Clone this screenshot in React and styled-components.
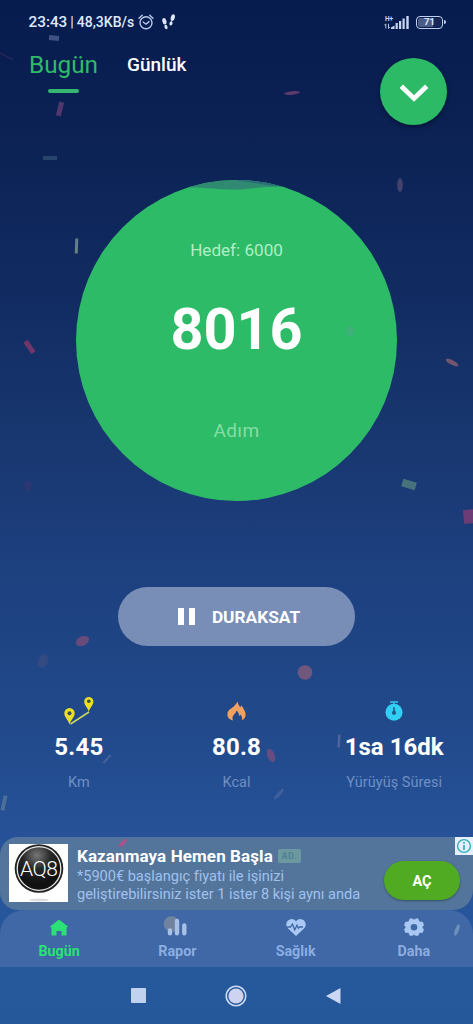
import React from "react";
import styled, { createGlobalStyle, css } from "styled-components";

const GlobalStyle = createGlobalStyle`
  * {
    box-sizing: border-box;
  }
  body {
    margin: 0;
    background: #26579c;
  }
`;

const Screen = styled.div`
  position: relative;
  display: flex;
  flex-direction: column;
  width: 473px;
  height: 1024px;
  overflow: hidden;
  color: white;
  font-family: Roboto, "Noto Sans", sans-serif;
  background: linear-gradient(
    #071c4e 0%,
    #0b2153 12%,
    #112b61 28%,
    #18366f 42%,
    #1d407f 56%,
    #21498a 70%,
    #275299 82%,
    #26589c 95%,
    #25579b 100%
  );
`;

// status bar
const StatusBar = styled.div`
  display: flex;
  align-items: center;
  height: 44px;
  padding: 0 27px 0 28.5px;
  color: #dfe8fb;
  font-weight: 500;
`;

const StatusText = styled.span`
  font-size: ${(props) => props.size}px;
  line-height: 20px;
  margin-right: ${(props) => props.gap || 0}px;
  white-space: pre;
`;

const StatusIcons = styled.div`
  display: flex;
  align-items: center;
  flex: 1;
  gap: 8px;
`;

const Signal = styled.svg`
  margin-right: 7px;
`;

const Battery = styled.div`
  position: relative;
  display: flex;
  align-items: center;
  justify-content: center;
  width: 27px;
  height: 13px;
  margin-right: 3px;
  border: 1.5px solid #c3d0ee;
  border-radius: 4px;
  font-size: 9.5px;
  line-height: 10px;
  font-weight: 700;
  background: linear-gradient(90deg, #4d5c87 65%, #16295b 65%);
  background-clip: content-box;
  padding: 1px;

  &::after {
    content: "";
    position: absolute;
    right: -4px;
    top: 3px;
    width: 2px;
    height: 4px;
    border-radius: 0 2px 2px 0;
    background: #c3d0ee;
  }
`;

// header
const Header = styled.div`
  display: flex;
  align-items: flex-start;
  height: 136px;
  padding: 7px 26px 0 29px;
`;

const Tab = styled.div`
  display: flex;
  flex-direction: column;
  align-items: center;
  line-height: 28px;
  color: white;
  font-size: 19px;
  font-weight: 500;
  margin-left: 29px;

  ${(props) =>
    props.active &&
    css`
      color: #2fba69;
      font-size: 24.3px;
      font-weight: 400;
      margin-left: 0;

      &::after {
        content: "";
        width: 31px;
        height: 4px;
        margin-top: 10px;
        border-radius: 2px;
        background: #35b771;
      }
    `};
`;

const RoundButton = styled.button`
  display: flex;
  align-items: center;
  justify-content: center;
  width: 67px;
  height: 67px;
  margin: 7px 0 0 auto;
  padding: 3px 0 0;
  border: 0;
  border-radius: 50%;
  background: #2dba66;
  box-shadow: 0 2px 4px rgba(0, 10, 30, 0.5);
`;

// step circle
const Circle = styled.div`
  position: relative;
  display: flex;
  flex-direction: column;
  align-items: center;
  flex: none;
  align-self: center;
  width: 321px;
  height: 321px;
  padding-top: 60px;
  border-radius: 50%;
  overflow: hidden;
  background: #2dbb67;
`;

const Wave = styled.svg`
  position: absolute;
  top: 0;
  left: 0;
`;

const Goal = styled.div`
  font-size: 17.1px;
  line-height: 20px;
  color: #b0eec5;
`;

const Steps = styled.div`
  margin-top: 35px;
  font-size: 57.6px;
  line-height: 70px;
  font-weight: 700;
`;

const Unit = styled.div`
  margin-top: 54px;
  font-size: 19px;
  line-height: 24px;
  letter-spacing: 0.4px;
  color: #86dea5;
`;

const PauseButton = styled.button`
  display: flex;
  align-items: center;
  justify-content: center;
  flex: none;
  align-self: center;
  gap: 17px;
  width: 237px;
  height: 59px;
  margin-top: 86px;
  padding: 0 0 0 5px;
  border: 0;
  border-radius: 30px;
  color: white;
  font-family: inherit;
  font-size: 17.3px;
  font-weight: 700;
  background: #798eb6;
`;

const PauseBars = styled.span`
  width: 17px;
  height: 17px;
  border: solid white;
  border-width: 0 6px;
`;

// stats
const Stats = styled.div`
  display: grid;
  grid-template-columns: repeat(3, 1fr);
  height: 191px;
  padding-top: 48px;
`;

const Stat = styled.div`
  display: flex;
  flex-direction: column;
  align-items: center;
`;

const StatIcon = styled.div`
  display: flex;
  align-items: center;
  justify-content: center;
  height: 34px;
`;

const StatValue = styled.div`
  margin-top: 3px;
  font-size: 24px;
  line-height: 32px;
  font-weight: 700;
  letter-spacing: ${(props) => props.spacing || 0}px;
  white-space: nowrap;
`;

const StatLabel = styled.div`
  margin-top: 11px;
  font-size: 14.5px;
  line-height: 18px;
  letter-spacing: 0.02px;
  color: #6f8fc4;
  white-space: nowrap;
`;

// ad
const Ad = styled.div`
  position: relative;
  display: flex;
  flex: none;
  height: 73px;
  padding: 7px 13px 0 9px;
  border-radius: 18px 0 20px 18px;
  background: #53749b;
`;

const AdLogo = styled.div`
  width: 59px;
  height: 58px;
  background: white;
`;

const AdBody = styled.div`
  flex: 1;
  padding-left: 9px;
`;

const AdTitle = styled.div`
  display: flex;
  align-items: center;
  gap: 5px;
  height: 24px;
  font-size: 17px;
  line-height: 24px;
  font-weight: 700;
  letter-spacing: 0.1px;
  white-space: nowrap;
`;

const AdTag = styled.span`
  width: 23px;
  height: 14px;
  border-radius: 2px;
  font-size: 9px;
  line-height: 15px;
  text-align: center;
  letter-spacing: 0.6px;
  color: #527f96;
  background: #6c98a0;
`;

const AdText = styled.div`
  font-size: 14.6px;
  line-height: 17.5px;
  letter-spacing: -0.03px;
  color: #a1c1ec;
  white-space: nowrap;
`;

const AdButton = styled.button`
  width: 76px;
  height: 39px;
  margin-top: 17px;
  padding: 2px 0 0;
  border: 0;
  border-radius: 20px;
  color: white;
  font-family: inherit;
  font-size: 14.5px;
  font-weight: 700;
  background: #50ab22;
  box-shadow: 0 1px 2px rgba(20, 50, 50, 0.5);
`;

const AdInfo = styled.svg`
  position: absolute;
  top: 0;
  right: 0;
  background: #e3f0fb;
`;

// bottom navigation
const BottomNav = styled.div`
  display: grid;
  grid-template-columns: repeat(4, 1fr);
  flex: none;
  height: 57px;
  border-radius: 24px 24px 0 0;
  background: #4067a6;
`;

const NavItem = styled.div`
  display: flex;
  flex-direction: column;
  align-items: center;
  padding-top: 7px;
  color: ${(props) => (props.active ? "#2ce078" : "#8baee2")};
  font-size: 14.3px;
  line-height: 18px;
  font-weight: 700;

  svg {
    margin-bottom: 5px;
    overflow: visible;
  }
`;

const SystemBar = styled.div`
  display: flex;
  align-items: center;
  justify-content: center;
  flex: 1;
  gap: 79px;
  padding-right: 1px;
`;

// confetti falls over everything
const Confetti = styled.svg`
  position: absolute;
  top: 0;
  left: 0;
  pointer-events: none;
`;

const rects = [
  { x: 54, y: 38, w: 10, h: 5, r: 5, color: "#3f5283" },
  { x: 60, y: 109, w: 5, h: 14, r: 14, color: "#50376c" },
  { x: 50, y: 158, w: 14, h: 4, r: 0, color: "#27446a" },
  { x: 76.5, y: 246, w: 3, h: 15, r: 2, color: "#64817f" },
  { x: 29.5, y: 347, w: 5, h: 14, r: -35, color: "#703669" },
  { x: 409, y: 484.5, w: 14, h: 8, r: 17, color: "#47727c" },
  { x: 469, y: 516.5, w: 11, h: 14, r: -4, color: "#6c3c77" },
  { x: 107, y: 759, w: 2, h: 11, r: 42, color: "#46649b" },
  { x: 339, y: 741, w: 2.5, h: 13, r: 3, color: "#52629a" },
  { x: 4, y: 803, w: 4, h: 15, r: 12, color: "#4a7098" },
  { x: 6, y: 56, w: 1, h: 16, r: -62, color: "#30285c" },
];

const ellipses = [
  { x: 292, y: 93, rx: 8, ry: 1.7, r: -6, color: "#603a6a" },
  { x: 400, y: 185, rx: 2.8, ry: 7, r: 0, color: "#43426d" },
  { x: 452, y: 362.5, rx: 7, ry: 2.3, r: 27, color: "#75546f" },
  { x: 28, y: 486, rx: 4, ry: 6, r: 0, color: "#2a3773" },
  { x: 82.5, y: 641, rx: 7, ry: 4.6, r: -25, color: "#694b79" },
  { x: 43, y: 661, rx: 5, ry: 7, r: 25, color: "#334a83" },
  { x: 305, y: 672.5, rx: 7.3, ry: 7.3, r: 0, color: "#70577c" },
  { x: 271, y: 755.5, rx: 3.7, ry: 7, r: -20, color: "#674c82" },
  { x: 279, y: 794, rx: 2, ry: 7, r: 42, color: "#3f609c" },
  { x: 123, y: 843, rx: 2, ry: 5.5, r: 45, color: "#a35489" },
  { x: 350, y: 331, rx: 4.5, ry: 5.5, r: 0, color: "#3db176" },
  { x: 457, y: 930, rx: 2, ry: 6, r: 20, color: "#6a90bb" },
];

const StatusBarRow = () => (
  <StatusBar>
    <StatusText size={15.3} gap={3}>23:43</StatusText>
    <StatusText size={14} gap={3}>|</StatusText>
    <StatusText size={14} gap={4}>48,3KB/s</StatusText>
    <StatusIcons>
      <svg width="16" height="16" viewBox="0 0 16 16" fill="none" stroke="#bac9ea" strokeWidth="1.4">
        <circle cx="8" cy="8.8" r="6" />
        <path d="M1 4.2 4.2 1.2M15 4.2 11.8 1.2M5.2 8 8 10.2 11 7.6" strokeLinecap="round" />
      </svg>
      <svg width="14" height="16" viewBox="0 0 14 16" fill="#dfe8fb">
        <ellipse cx="2.4" cy="7.3" rx="2" ry="3.3" transform="rotate(-14 2.4 7.3)" />
        <ellipse cx="4" cy="13" rx="1.5" ry="2.2" transform="rotate(-14 4 13)" />
        <ellipse cx="10.8" cy="3.6" rx="2" ry="3.5" transform="rotate(14 10.8 3.6)" />
        <ellipse cx="9" cy="9.4" rx="1.5" ry="2.2" transform="rotate(14 9 9.4)" />
      </svg>
    </StatusIcons>
    <Signal width="25" height="15" viewBox="0 0 25 15" fill="#c9d5f1">
      <text x="1" y="5.5" fontSize="6.5" fontWeight="700">H+</text>
      <path d="M1.8 9v4.5M.5 10.3 1.8 8.8M4.5 8.8v4.6M5.8 12 4.5 13.5" stroke="#c9d5f1" strokeWidth=".9" />
      <path d="M7 14v-1.5l3.5-2V14zM11.6 14V8h2.2v6zM15 14V6h2.2v8zM18.5 14V3.5h2.200V14zM22.300 14V1h2.400v13z" />
    </Signal>
    <Battery>71</Battery>
  </StatusBar>
);

const RouteIcon = () => (
  <svg width="30" height="30" viewBox="0 0 30 30">
    <path d="M6.5 28 25 16" stroke="#c8d660" strokeWidth="1.6" />
    <path d="M5.5 28.8C4.8 24.5.3 21.5.3 17.3a5.2 5.2 0 0 1 10.4 0c0 4.2-4.5 7.2-5.2 11.5z" fill="#eadf22" />
    <circle cx="5.5" cy="17.2" r="2" fill="#3b4d55" />
    <path d="M24.8 16.2c-.6-4.2-4.6-6.7-4.6-10.6a4.6 4.6 0 0 1 9.2 0c0 3.9-4 6.4-4.6 10.6z" fill="#eadf22" />
    <circle cx="24.8" cy="5.2" r="1.8" fill="#3b4d55" />
  </svg>
);

const FlameIcon = () => (
  <svg width="19" height="20" viewBox="0 0 19 20">
    <path
      d="M10.6.3c.2 3.2 1.5 4.4 2.6 6 .6-.6 1-1.2 1.1-2 2.1 3 4.4 6.2 4.3 9.6-.1 2.3-1.3 4.2-3.7 5.4.7-2 .1-4.2-1.7-5.9-.2.8-.6 1.300-1.2 1.600.1-2.500-1-4.200-2.700-5.500-.2 3.600-3.800 4.200-3.800 7.600 0 .9.2 1.600.5 2.300C2 18.300.4 16.300.4 13.400c.1-4.800 4-5.500 6.300-7.900C8.500 3.900 9.600 2.300 10.600.3z"
      fill="#f2a160"
    />
  </svg>
);

const StopwatchIcon = () => (
  <svg width="18" height="20" viewBox="0 0 18 20">
    <path d="M5 1h8M9 1v3" stroke="#35c3ec" strokeWidth="1.5" />
    <circle cx="9" cy="11.3" r="8.5" fill="#31cff3" />
    <path d="M9 6.3v5" stroke="#1e5a8c" strokeWidth="1.6" />
    <circle cx="9" cy="11.8" r="2.1" fill="#1e5a8c" />
  </svg>
);

const App = () => (
  <>
    <GlobalStyle />
    <Screen>
      <StatusBarRow />
      <Header>
        <Tab active>Bugün</Tab>
        <Tab>Günlük</Tab>
        <RoundButton>
          <svg width="30" height="18" viewBox="0 0 30 18" fill="none" stroke="white" strokeWidth="4.8">
            <path d="M2.300 2.300 15 14.400 27.700 2.300" />
          </svg>
        </RoundButton>
      </Header>

      <Circle>
        <Wave width="321" height="12" viewBox="0 0 321 12">
          <path d="M112 0H206V6.6C188 6 172 9.7 158 9.700C142 9.700 130 7.300 112 7.500z" fill="#2f8a71" />
          <path d="M162 0H210V6.600C190 6 183 3 162 1z" fill="#2a6d77" />
        </Wave>
        <Goal>Hedef: 6000</Goal>
        <Steps>8016</Steps>
        <Unit>Adım</Unit>
      </Circle>

      <PauseButton>
        <PauseBars />
        DURAKSAT
      </PauseButton>

      <Stats>
        <Stat>
          <StatIcon><RouteIcon /></StatIcon>
          <StatValue spacing={0.2}>5.45</StatValue>
          <StatLabel>Km</StatLabel>
        </Stat>
        <Stat>
          <StatIcon><FlameIcon /></StatIcon>
          <StatValue spacing={0.2}>80.8</StatValue>
          <StatLabel>Kcal</StatLabel>
        </Stat>
        <Stat>
          <StatIcon><StopwatchIcon /></StatIcon>
          <StatValue>1sa 16dk</StatValue>
          <StatLabel>Yürüyüş Süresi</StatLabel>
        </Stat>
      </Stats>

      <Ad>
        <AdLogo>
          <svg width="59" height="58" viewBox="0 0 59 58">
            <defs>
              <radialGradient id="ball" cx="45%" cy="20%" r="65%">
                <stop offset="0" stopColor="#777" />
                <stop offset="0.5" stopColor="#262626" />
                <stop offset="1" stopColor="#111" />
              </radialGradient>
            </defs>
            <circle cx="30" cy="24.5" r="24.3" fill="#222" />
            <circle cx="30" cy="24.5" r="21.8" fill="url(#ball)" stroke="#e8e8e8" strokeWidth="1.3" />
            <text x="30" y="31.5" fontSize="21" fontWeight="300" textAnchor="middle" textLength="38" fill="white">
              AQ8
            </text>
            <ellipse cx="30" cy="56" rx="10" ry="1.5" fill="#ddd" />
          </svg>
        </AdLogo>
        <AdBody>
          <AdTitle>
            Kazanmaya Hemen Başla
            <AdTag>AD.</AdTag>
          </AdTitle>
          <AdText>*5900€ başlangıç fiyatı ile işinizi</AdText>
          <AdText>geliştirebilirsiniz ister 1 ister 8 kişi aynı anda</AdText>
        </AdBody>
        <AdButton>AÇ</AdButton>
        <AdInfo width="18" height="18" viewBox="0 0 18 18">
          <circle cx="9" cy="9" r="6.4" fill="none" stroke="#35afb9" strokeWidth="1.4" />
          <path d="M9 8v5M9 5v1.7" stroke="#35afb9" strokeWidth="1.7" />
        </AdInfo>
      </Ad>

      <BottomNav>
        <NavItem active>
          <svg width="18" height="20" viewBox="0 0 18 20" fill="currentColor">
            <path d="M9 2.500.4 9.200c-.5.500-.2 1 .4 1h.6v7.300c0 .6.300 1 .9 1H6.500V14h5v4.500h4.200c.6 0 .9-.4.900-1v-7.300h.6c.6 0 .9-.5.400-1z" />
          </svg>
          Bugün
        </NavItem>
        <NavItem>
          <svg width="20" height="20" viewBox="0 0 20 20" fill="none" stroke="#a9c0e5" strokeWidth="4.4" strokeLinecap="round">
            <circle cx="4.500" cy="7" r="7.800" fill="#71849f" stroke="none" />
            <path d="M3 13.500v2.800M10 4v12.300M17.300 8.500v7.800" />
          </svg>
          Rapor
        </NavItem>
        <NavItem>
          <svg width="20" height="20" viewBox="0 0 20 20">
            <path d="M10 19 2 11.500C-1.200 8.500.2 3 4.800 2.200 7 1.800 9 2.800 10 4.500c1-1.700 3-2.700 5.200-2.300C19.800 3 21.200 8.500 18 11.500z" fill="#a9c8f4" />
            <path d="M0 10h4.500l2-2.800 2.200 5.600 2.300-4.600 1.400 3 1.200-1.200H17" fill="none" stroke="#4067a6" strokeWidth="1.3" />
          </svg>
          Sağlık
        </NavItem>
        <NavItem>
          <svg width="20" height="20" viewBox="0 0 20 20">
            <path
              d="M6 1.800h2L10 3l2-1.200h2L15.500 5h3L19.600 8 18 10.200l1.600 2.300-1.100 3h-3L14 18.600h-2l-2-1.200-2 1.200H6l-1.500-3.100h-3l-1.100-3L2 10.200.4 8 1.500 5h3z"
              fill="#a9c8f4"
              stroke="#a9c8f4"
              strokeWidth=".6"
              strokeLinejoin="round"
            />
            <circle cx="10" cy="10.200" r="3.300" fill="#4067a6" />
          </svg>
          Daha
        </NavItem>
      </BottomNav>

      <SystemBar>
        <svg width="15" height="15"><rect width="15" height="15" rx="1" fill="#c0d2ee" /></svg>
        <svg width="22" height="22" viewBox="0 0 22 22">
          <circle cx="11" cy="11" r="9.800" fill="none" stroke="#ccd8f3" strokeWidth="1.600" />
          <circle cx="11" cy="11" r="7.600" fill="#ccd4f0" />
        </svg>
        <svg width="15" height="16"><path d="M0 8 14.500 0v16z" fill="#ccd8f3" /></svg>
      </SystemBar>

      <Confetti width="473" height="1024" viewBox="0 0 473 1024">
        {rects.map((c) => (
          <rect
            key={`${c.x}-${c.y}`}
            x={c.x - c.w / 2}
            y={c.y - c.h / 2}
            width={c.w}
            height={c.h}
            fill={c.color}
            transform={`rotate(${c.r} ${c.x} ${c.y})`}
          />
        ))}
        {ellipses.map((c) => (
          <ellipse
            key={`${c.x}-${c.y}`}
            cx={c.x}
            cy={c.y}
            rx={c.rx}
            ry={c.ry}
            fill={c.color}
            transform={`rotate(${c.r} ${c.x} ${c.y})`}
          />
        ))}
      </Confetti>
    </Screen>
  </>
);

export default App;
